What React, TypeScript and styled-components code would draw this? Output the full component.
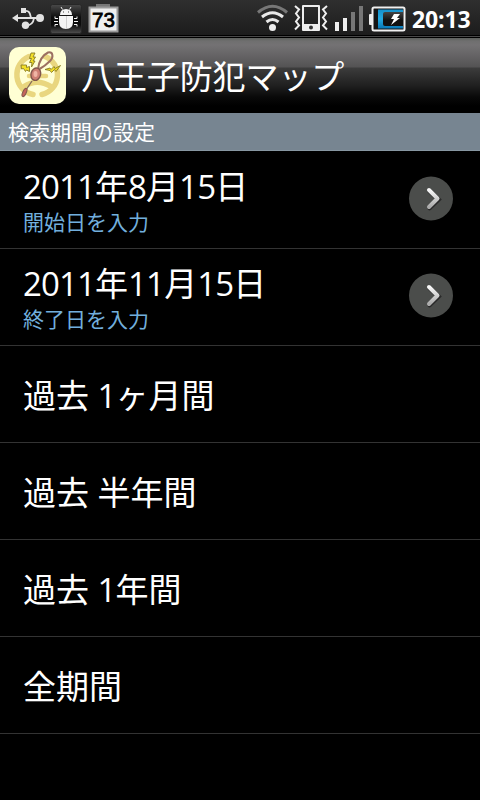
import React from 'react';
import styled, { createGlobalStyle } from 'styled-components';

const GlobalStyle = createGlobalStyle`
  html, body { margin: 0; background: #000; }
  * { box-sizing: border-box; }
  body { font-family: "Open Sans", "Noto Sans CJK JP", sans-serif; color: #fff; }
`;

const Screen = styled.main`
  width: 480px;
  height: 800px;
  overflow: hidden;
  background: #000;
  display: flex;
  flex-direction: column;
`;

const StatusBar = styled.header`
  flex: none;
  height: 38px;
  display: flex;
  justify-content: space-between;
  background: linear-gradient(#2f2f2f 0, #1c1c1c 35px, #000 35px, #000 36px, #484848 36px, #484848 37px, #000 37px);
`;

const StatusGroup = styled.div`
  display: flex;
  height: 38px;
`;

const Clock = styled.time`
  width: 68px;
  font: 700 23px/39px "Open Sans", sans-serif;
  letter-spacing: -0.1px;
  white-space: nowrap;
`;

const TitleBar = styled.div`
  flex: none;
  height: 75px;
  padding: 9px 9px 0;
  display: flex;
  background: linear-gradient(#5d605c 0, #6f6f6f 3px, #747274 7px, #545354 29px, #3c3c3c 30px, #1f1f1f 48px, #090909 59px, #000 68px);
`;

const Title = styled.h1`
  margin: 0 0 0 15px;
  font-family: "Noto Sans CJK JP", sans-serif;
  font-size: 33px;
  line-height: 57px;
  font-weight: 400;
  letter-spacing: -0.1px;
  white-space: nowrap;
`;

const SectionHeader = styled.h2`
  flex: none;
  margin: 0;
  height: 38px;
  padding-left: 8px;
  border-bottom: 1px solid #8797a2;
  background: #778591;
  font: 400 21px/36px "Noto Sans CJK JP", sans-serif;
`;

const List = styled.ul`
  margin: 0;
  padding: 1px 0 0;
  list-style: none;
`;

const Row = styled.li`
  height: 97px;
  padding: 0 27px 0 23px;
  border-bottom: 1px solid #333;
  display: flex;
  align-items: center;
  justify-content: space-between;
`;

const RowText = styled.div`
  display: flex;
  flex-direction: column;
  padding-top: 1px;
`;

const Label = styled.span`
  font-family: "Noto Sans CJK JP", sans-serif;
  font-size: 33px;
  line-height: 41px;
  white-space: pre;
`;

const Num = styled.span`
  font-family: "Open Sans", sans-serif;
  font-size: 33px;
  line-height: 1;
  letter-spacing: -0.85px;
  word-spacing: 0.8px;
`;

const Hint = styled.span`
  font: 400 21px/31px "Noto Sans CJK JP", sans-serif;
  color: #72afdd;
`;

const Icon = styled.svg`
  display: block;
  flex: none;
`;

const ChevronIcon = styled(Icon)`
  margin-bottom: 4px;
`;

const LeftIcons = () => (
  <Icon width="124" height="38" viewBox="0 0 124 38">
    <defs>
      <linearGradient id="tile" x2="0" y2="1">
        <stop stopColor="#4a4a4a" />
        <stop offset=".45" stopColor="#0c0c0c" />
        <stop offset=".7" stopColor="#0c0c0c" />
        <stop offset="1" stopColor="#505050" />
      </linearGradient>
    </defs>
    <g stroke="#e2e2e2" strokeWidth="1.8" fill="none">
      <path d="M16 18H40M25 11C30 10.500 30 14 31 18M26 25.500C32 25.500 33.500 22 34 18" />
      <path d="M12 18l6-4v8z" fill="#e2e2e2" stroke="none" />
      <circle cx="40" cy="18" r="4" fill="#e2e2e2" stroke="none" />
      <circle cx="25.500" cy="25.300" r="3.700" fill="#e2e2e2" stroke="none" />
      <path d="M21 8h5v5h-5z" fill="#e2e2e2" stroke="none" />
    </g>
    <rect x="50.500" y="4.500" width="31" height="29" rx="2" fill="url(#tile)" stroke="#272727" />
    <g fill="#f4f4f4" stroke="#f4f4f4">
      <path d="M60 15q0-6 6-6t6 6z" stroke="none" />
      <path d="M62.500 9.500l-1.500-2.500M69.500 9.500l1.500-2.500" strokeWidth="1" />
      <path d="M59 16h14v6q0 7-7 7t-7-7z" stroke="none" />
      <path d="M58 18.500h-3v-2M58 21.500h-4M58 24.500h-3v2M74 18.500h3v-2M74 21.500h4M74 24.500h3v2" fill="none" strokeWidth="1" />
      <path d="M66.500 16v13" stroke="#d0d0d0" strokeWidth="1" />
      <path d="M63 12h1M68 12h1" stroke="#444" />
    </g>
    <path d="M96 4h14v4h-14z" fill="#777" />
    <path d="M89.500 7.500h28v24h-28z" fill="#eee" stroke="#999" strokeWidth="2" />
    <text x="103.500" y="26.500" textAnchor="middle" fontFamily="Liberation Sans, sans-serif" fontSize="20.500" fill="#000" stroke="#000" strokeWidth=".8">73</text>
  </Icon>
);

const RightIcons = () => (
  <Icon width="160" height="38" viewBox="252 0 160 38">
    <defs>
      <linearGradient id="charge" x2="0" y2="1">
        <stop stopColor="#1590cb" />
        <stop offset=".5" stopColor="#25a9df" />
        <stop offset="1" stopColor="#0877b6" />
      </linearGradient>
      <linearGradient id="glass" x2="0" y2="1">
        <stop stopColor="#444" />
        <stop offset=".6" stopColor="#111" />
      </linearGradient>
    </defs>
    <g fill="none" strokeWidth="3">
      <path d="M258 12.500Q272.500 0 287 12.500" stroke="#777" />
      <path d="M262 17Q272.500 8.500 283 17" stroke="#e8e8e8" />
      <path d="M266.500 22Q272.500 17 278.500 22" stroke="#e8e8e8" />
    </g>
    <circle cx="272.500" cy="27.500" r="3.500" fill="#eee" />
    <path d="M303 5h16a1 1 0 0 1 1 1v24a1 1 0 0 1-1 1h-16a1 1 0 0 1-1-1V6a1 1 0 0 1 1-1zM304 7v17h14V7z" fill="#eee" fillRule="evenodd" />
    <circle cx="311" cy="27.500" r="2" fill="#333" />
    <path d="M295 6l4 3.500-3 4 3 4-3 4 3 4-4 4M327 6l-4 3.500 3 4-3 4 3 4-3 4 4 4" fill="none" stroke="#eee" strokeWidth="2" />
    <path d="M335 22h4v9h-4zM343 18h4v13h-4z" fill="#eee" />
    <path d="M351 12h4v19h-4zM359 6h4v25h-4z" fill="#777" />
    <rect x="369" y="14" width="5" height="11" rx="1" fill="#eee" />
    <rect x="372.500" y="7.500" width="32" height="23" rx="1.500" fill="#151515" stroke="#f0f0f0" strokeWidth="2" />
    <path d="M378 9.500h25v19h-25z" fill="url(#charge)" />
    <path d="M385 12h18v14h-18q-2 0-2-2V14q0-2 2-2z" fill="url(#glass)" />
    <path d="M394 14h6l-3 4h3l-9 7 3-6h-3z" fill="#fff" />
  </Icon>
);

const AppIcon = () => (
  <Icon width="57" height="57" viewBox="0 0 57 57" role="img">
    <rect width="57" height="57" rx="10" fill="#ffffd4" />
    <g fill="none" stroke="#e9d67f" strokeWidth="5.500" strokeLinecap="round">
      <path d="M24 47.500A20 20 0 0 1 20 9.500M36 9.500A20 20 0 0 1 33 47.500" />
      <path d="M15 39.500Q28 31 42 39.500" />
      <path d="M20 29H37" strokeWidth="4.500" />
    </g>
    <g fill="#f3df26" stroke="#887c25" strokeWidth=".9" strokeLinejoin="round">
      <path d="M22 6l4 0-2 4 2.500 0-2.500 4 2 0-3.500 6 .5-4.500-2.500 0 2-4-2 0z" />
      <path d="M12 18l5.500 0 0 2.500 3-1 0 5-3-1.500-1 1.500-2-3-2 .5z" />
      <path d="M36 22.500l5-1.500 1 1.500 3-3 1 2 5.500-3-4.500 6-1.500-2-3 3-1.500-2z" />
    </g>
    <path d="M29 22C30 14 34 8 39 5.500C44 4.500 45 10 41 14Q36 19 30.500 22" fill="none" stroke="#9c7062" strokeWidth="2" />
    <path d="M23 34l-6 9" stroke="#806759" strokeWidth="1.300" />
    <ellipse cx="26.800" cy="27.200" rx="4.800" ry="6.300" transform="rotate(15 26.800 27.200)" fill="#cf8074" stroke="#80564d" strokeWidth="1.400" />
    <ellipse cx="26.500" cy="27" rx="2" ry="3" fill="#efb5a5" />
    <ellipse cx="15.500" cy="45.500" rx="1.700" ry="4.500" transform="rotate(25 15.500 45.500)" fill="#c7645b" stroke="#80564d" />
  </Icon>
);

const Chevron = () => (
  <ChevronIcon width="45" height="45" viewBox="0 0 45 45">
    <defs>
      <linearGradient id="arrow" x2="0" y2="1">
        <stop stopColor="#f8f8f8" />
        <stop offset="1" stopColor="#aaa" />
      </linearGradient>
    </defs>
    <circle cx="23" cy="22.500" r="22" fill="#4b4d4b" />
    <path d="M21.500 15l9 8.500-9 8.500" fill="none" stroke="#292929" strokeWidth="4.500" strokeLinecap="round" />
    <path d="M21 14l8.500 8.500-8.500 8.500" fill="none" stroke="url(#arrow)" strokeWidth="4" strokeLinecap="round" strokeLinejoin="round" />
  </ChevronIcon>
);

const dates = [
  { parts: ['2011', '年', '8', '月', '15', '日'], hint: '開始日を入力' },
  { parts: ['2011', '年', '11', '月', '15', '日'], hint: '終了日を入力' },
];

const presets = [['過去', ' 1', 'ヶ月間'], ['過去', ' ', '半年間'], ['過去', ' 1', '年間'], ['全期間']];

const renderParts = (parts: string[]) =>
  parts.map((p, i) => (/^[\d ]+$/.test(p) ? <Num key={i}>{p}</Num> : p));

export default function App() {
  return (
    <Screen>
      <GlobalStyle />
      <StatusBar>
        <StatusGroup><LeftIcons /></StatusGroup>
        <StatusGroup><RightIcons /><Clock>20:13</Clock></StatusGroup>
      </StatusBar>
      <TitleBar><AppIcon /><Title>八王子防犯マップ</Title></TitleBar>
      <SectionHeader>検索期間の設定</SectionHeader>
      <List>
        {dates.map((d) => (
          <Row key={d.hint}>
            <RowText>
              <Label>{renderParts(d.parts)}</Label>
              <Hint>{d.hint}</Hint>
            </RowText>
            <Chevron />
          </Row>
        ))}
        {presets.map((p) => (
          <Row key={p.join('')}><Label>{renderParts(p)}</Label></Row>
        ))}
      </List>
    </Screen>
  );
}
